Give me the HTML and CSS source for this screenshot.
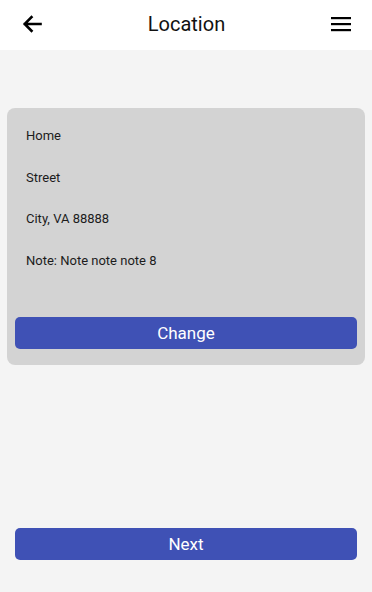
FILE: index.html
```html
<!DOCTYPE html>
<html lang="en">
<head>
    <meta charset="UTF-8">
    <meta name="viewport" content="width=device-width, initial-scale=1.0">
    <title>Location</title>
    <link rel="stylesheet" href="styles.css">
</head>
<body>
    <header class="topbar">
        <button class="icon-btn" aria-label="Back">
            <svg width="20" height="18" viewBox="0 0 20 18">
                <path d="M18.5 9H3M9.5 2.2L2.7 9l6.8 6.8" fill="none" stroke="#000" stroke-width="2.6" stroke-linecap="square"/>
            </svg>
        </button>
        <h1 class="title">Location</h1>
        <button class="icon-btn" aria-label="Menu">
            <svg width="20" height="16" viewBox="0 0 20 16">
                <rect x="0" y="1" width="20" height="2.2" fill="#000"/>
                <rect x="0" y="7" width="20" height="2.2" fill="#000"/>
                <rect x="0" y="13" width="20" height="2.2" fill="#000"/>
            </svg>
        </button>
    </header>
    <main class="content">
        <div class="card">
            <p class="line">Home</p>
            <p class="line">Street</p>
            <p class="line">City, VA 88888</p>
            <p class="line">Note: Note note note 8</p>
            <button class="primary card-btn">Change</button>
        </div>
        <button class="primary next-btn">Next</button>
    </main>
</body>
</html>
```

FILE: styles.css
```css
body {
    margin: 0;
    font-family: Roboto, "Noto Sans", Arial, sans-serif;
    background-color: #f4f4f4;
    color: #212121;
    height: 592px;
    display: flex;
    flex-direction: column;
}
.topbar {
    height: 50px;
    background: white;
    display: flex;
    align-items: center;
    justify-content: space-between;
    padding: 0 21px 0 22px;
    flex-shrink: 0;
}
.icon-btn {
    background: none;
    border: none;
    padding: 0;
    width: 20px;
    height: 20px;
    display: flex;
    align-items: center;
    justify-content: center;
    margin-top: -2px;
}
.title {
    margin: 0;
    font-size: 20px;
    font-weight: 400;
    color: #111;
    margin-top: -3px;
}
.content {
    flex-grow: 1;
    display: flex;
    flex-direction: column;
    padding: 58px 7px 32px 7px;
}
.card {
    background: #d3d3d3;
    border-radius: 8px;
    padding: 15px 8px 16px 8px;
    display: flex;
    flex-direction: column;
}
.line {
    margin: 0 0 0 11px;
    font-size: 13px;
    line-height: 26px;
    height: 41.5px;
    color: #1c1c1c;
}
.primary {
    background-color: #3f51b5;
    color: white;
    border: none;
    border-radius: 5px;
    height: 32px;
    font-family: inherit;
    font-size: 17px;
    cursor: pointer;
}
.card-btn {
    margin-top: 28px;
}
.next-btn {
    margin: auto 8px 0 8px;
}
```
